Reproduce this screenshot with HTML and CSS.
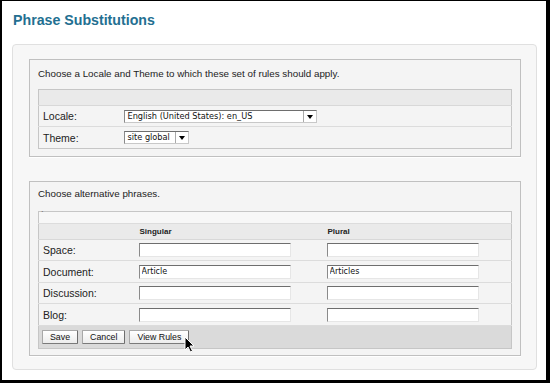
FILE: index.html
```html
<!DOCTYPE html>
<html lang="en">
<head>
  <meta charset="UTF-8">
  <title>Phrase Substitutions</title>
  <link rel="stylesheet" href="styles.css">
</head>
<body>

  <!-- Page title -->
  <h1 class="title">Phrase Substitutions</h1>

  <div class="panel">

    <!-- Locale / theme -->
    <div class="box box-locale">
      <p class="intro">Choose a Locale and Theme to which these set of rules should apply.</p>
      <table class="grid grid-locale">
        <colgroup><col class="col-label"><col></colgroup>
        <tr class="head"><th></th><th></th></tr>
        <tr class="row-a">
          <td class="label">Locale:</td>
          <td><span class="select select-wide">English (United States): en_US<span class="arrow"></span></span></td>
        </tr>
        <tr class="row-b">
          <td class="label">Theme:</td>
          <td><span class="select select-small">site global<span class="arrow"></span></span></td>
        </tr>
      </table>
    </div>

    <!-- Phrases -->
    <div class="box box-phrases">
      <p class="intro">Choose alternative phrases.</p>
      <table class="grid grid-phrases">
        <colgroup><col class="col-label"><col class="col-singular"><col></colgroup>
        <tr class="blank"><td colspan="3"><span class="tick">`</span></td></tr>
        <tr class="head"><th></th><th>Singular</th><th>Plural</th></tr>
        <tr class="row-a">
          <td class="label">Space:</td>
          <td><input class="field" type="text" value=""></td>
          <td><input class="field" type="text" value=""></td>
        </tr>
        <tr class="row-b">
          <td class="label">Document:</td>
          <td><input class="field" type="text" value="Article"></td>
          <td><input class="field" type="text" value="Articles"></td>
        </tr>
        <tr class="row-a">
          <td class="label">Discussion:</td>
          <td><input class="field" type="text" value=""></td>
          <td><input class="field" type="text" value=""></td>
        </tr>
        <tr class="row-b">
          <td class="label">Blog:</td>
          <td><input class="field" type="text" value=""></td>
          <td><input class="field" type="text" value=""></td>
        </tr>
        <tr class="actions">
          <td colspan="3">
            <div class="buttons">
              <button class="btn" type="button">Save</button>
              <button class="btn" type="button">Cancel</button>
              <span class="btn-wrap">
                <button class="btn" type="button">View Rules</button>
                <svg class="cursor" width="11" height="17" viewBox="0 0 11 17">
                  <path d="M1 1 L1 14 L4 11 L6.5 16 L8.5 15 L6 10 L10 10 Z" fill="#000" stroke="#fff" stroke-width="1"/>
                </svg>
              </span>
            </div>
          </td>
        </tr>
      </table>
    </div>

  </div>

</body>
</html>
```

FILE: styles.css
```css
html {
  background: #000;
}

body {
  width: 550px;
  height: 383px;
  margin: 0;
  box-sizing: border-box;
  border-style: solid;
  border-color: #000;
  border-width: 1px 4px 3px 2px;
  background: #ffffff;
  font-family: 'Liberation Sans', Arial, sans-serif;
  font-size: 11px;
  color: #222;
  overflow: hidden;
}

/* Title */
.title {
  margin: 9px 0 0 11px;
  height: 24px;
  font-size: 14.2px;
  font-weight: bold;
  color: #236f91;
  line-height: 20px;
}

/* Outer panel */
.panel {
  width: 525px;
  height: 326px;
  margin: 10px 0 0 10px;
  box-sizing: border-box;
  padding: 14px 0 0 16px;
  background: #f7f7f7;
  border: 1px solid #e0e0e0;
  border-radius: 4px;
}

.box {
  width: 492px;
  box-sizing: border-box;
  padding: 0 8px 8px 8px;
  background: #f4f4f4;
  border: 1px solid #c0c0c0;
  box-shadow: 0 1px 0 #fff;
}

.box-locale {
  height: 98px;
}

.box-phrases {
  height: 175px;
  margin-top: 24px;
}

.intro {
  margin: 0;
  height: 29px;
  line-height: 27px;
  font-size: 9.8px;
  color: #222;
}

.box-phrases .intro {
  height: 29px;
  line-height: 23px;
}

/* Tables */
.grid {
  width: 474px;
  border-collapse: collapse;
  table-layout: fixed;
  border: 1px solid #c6c6c6;
}

.grid td,
.grid th {
  padding: 0;
  vertical-align: middle;
  text-align: left;
}

.grid-locale .col-label {
  width: 85px;
}

.grid-phrases .col-label {
  width: 100px;
}

.grid-phrases .col-singular {
  width: 188px;
}

.grid .head th {
  height: 15px;
  background: #eaeaea;
  border-bottom: 1px solid #d8d8d8;
  font-size: 8px;
  font-weight: bold;
  color: #222;
  padding-left: 1px;
}

.grid .row-a td {
  height: 20px;
  background: #f4f4f4;
  border-bottom: 1px solid #dcdcdc;
}

.grid .row-b td {
  height: 21px;
  background: #f4f4f4;
  border-bottom: 1px solid #dcdcdc;
}

.grid-locale .row-b td {
  border-bottom: none;
}

.grid .label {
  padding-left: 4px;
  font-size: 10.5px;
  color: #222;
}

.grid .blank td {
  height: 11px;
  background: #f7f7f7;
  border-bottom: 1px solid #dcdcdc;
  vertical-align: top;
}

.tick {
  display: block;
  margin: -2px 0 0 2px;
  font-size: 8px;
  line-height: 8px;
  color: #333;
}

/* Fake select */
.select {
  position: relative;
  display: inline-block;
  height: 13px;
  box-sizing: border-box;
  padding-left: 3px;
  background: #fff;
  border: 1px solid #c8c8c8;
  border-top-color: #6e6e6e;
  border-left-color: #8a8a8a;
  font-family: 'DejaVu Sans', Verdana, sans-serif;
  font-size: 8.2px;
  line-height: 11px;
  color: #111;
  vertical-align: middle;
}

.select-wide {
  width: 193px;
}

.select-small {
  width: 65px;
}

.select .arrow {
  position: absolute;
  top: 0;
  right: 0;
  width: 12px;
  height: 11px;
  border-left: 1px solid #aaa;
  background: #fff;
}

.select .arrow::after {
  content: "";
  position: absolute;
  left: 3px;
  top: 4px;
  border-style: solid;
  border-width: 4px 3px 0 3px;
  border-color: #000 transparent transparent transparent;
}

/* Text fields */
.field {
  display: block;
  width: 152px;
  height: 14px;
  box-sizing: border-box;
  margin: 0;
  padding: 0 0 0 2px;
  background: #fff;
  border: 1px solid #e6e6e6;
  border-top-color: #6e6e6e;
  border-left-color: #8a8a8a;
  border-radius: 0;
  font-family: 'DejaVu Sans', Verdana, sans-serif;
  font-size: 8px;
  color: #111;
  outline: none;
}

/* Buttons row */
.grid .actions td {
  height: 22px;
  background: #dadada;
}

.buttons {
  display: flex;
  gap: 4px;
  padding-left: 3px;
}

.btn {
  height: 14px;
  padding: 0 7px;
  background: linear-gradient(#ffffff, #ececec);
  border: 1px solid #a8a8a8;
  border-right-color: #6e6e6e;
  border-bottom-color: #7a7a7a;
  border-radius: 1px;
  font-family: 'Liberation Sans', Arial, sans-serif;
  font-size: 8.8px;
  line-height: 12px;
  color: #111;
}

.btn-wrap {
  position: relative;
}

.cursor {
  position: absolute;
  left: 55px;
  top: 6px;
}
```
